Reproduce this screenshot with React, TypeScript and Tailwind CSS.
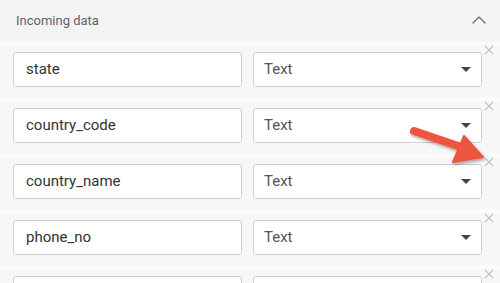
import { ChevronUp, X } from 'lucide-react'

const fields = ['state', 'country_code', 'country_name', 'phone_no', '']

function Row({ name }: { name: string }) {
  return (
    <div className="relative flex h-[56px] gap-[11px] border-t-[3px] border-[#fbfbfb] bg-[#f7f7f7] pl-[13px] pt-[7px]">
      <div className="flex h-[35px] w-[229px] items-center rounded-[3px] border border-[#cfcfcf] bg-white px-[12px] text-[15px] text-[#333]">
        {name}
      </div>
      <div className="flex h-[35px] w-[229px] items-center justify-between rounded-[3px] border border-[#cfcfcf] bg-white pl-[10px] pr-[10px] text-[15px] text-[#555]">
        <span>{name ? 'Text' : ''}</span>
        <svg width="10" height="5" viewBox="0 0 10 5">
          <path d="M0 0 L10 0 L5 5 Z" fill="#444" />
        </svg>
      </div>
      <X className="absolute right-[3px] top-[-3px] text-[#c4c4c4]" size={16} strokeWidth={1.6} />
    </div>
  )
}

export default function App() {
  return (
    <div
      className="relative h-[283px] w-[500px] overflow-hidden bg-[#f7f7f7]"
      style={{ fontFamily: 'Roboto, "Liberation Sans", sans-serif' }}
    >
      <div className="flex h-[42px] items-center justify-between bg-[#f4f4f4] pl-[16px] pr-[9px]">
        <span className="text-[13px] text-[#5f6368]">Incoming data</span>
        <ChevronUp className="mb-[3px] text-[#6b6b6b]" size={24} strokeWidth={1.3} />
      </div>
      {fields.map((f, i) => (
        <Row key={i} name={f} />
      ))}
      <svg className="absolute left-[400px] top-[120px]" width="95" height="50" viewBox="0 0 95 50">
        <defs>
          <filter id="sh" x="-20%" y="-40%" width="140%" height="180%">
            <feDropShadow dx="1" dy="2" stdDeviation="1.5" floodColor="#000" floodOpacity="0.35" />
          </filter>
        </defs>
        <g filter="url(#sh)">
          <path d="M14 11 L64 28" stroke="#ee5540" strokeWidth="8" strokeLinecap="round" />
          <path d="M83 37 L53 42 L64 16 Z" fill="#ee5540" strokeLinejoin="round" stroke="#ee5540" strokeWidth="2" />
        </g>
      </svg>
    </div>
  )
}
